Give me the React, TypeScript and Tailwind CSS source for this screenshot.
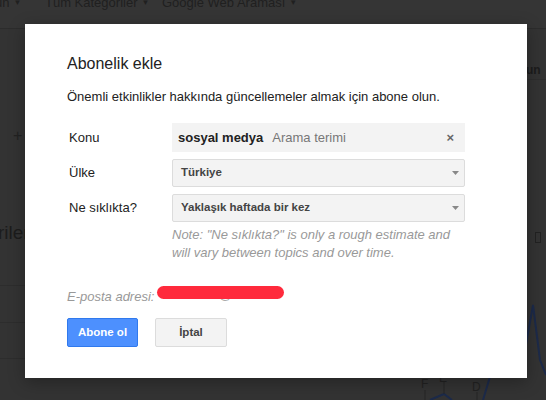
import React from "react";

function Caret() {
  return (
    <svg width="7" height="4" viewBox="0 0 7 4" className="shrink-0">
      <path d="M0 0h7L3.5 4z" fill="#888" />
    </svg>
  );
}

export default function App() {
  return (
    <div
      className="relative h-[400px] w-[546px] overflow-hidden bg-[#333333] text-[13px]"
      style={{ fontFamily: '"Liberation Sans", Arial, sans-serif' }}
    >
      {/* dimmed page behind the dialog */}
      <div className="flex h-[29px] items-start border-b border-[#2c2c2c] bg-[#353535] text-[13px] leading-none text-[#202020]">
        <span className="-mt-[4px] -ml-[5px] flex w-[50px] items-center gap-1">un <span className="text-[8px]">▼</span></span>
        <span className="-mt-[4px] flex w-[117px] items-center gap-1">Tüm Kategoriler <span className="text-[8px]">▼</span></span>
        <span className="-mt-[4px] flex items-center gap-1">Google Web Araması <span className="text-[8px]">▼</span></span>
      </div>
      <div className="absolute top-[60px] right-0 flex h-[20px] w-[20px] items-center border-b border-[#2e2e2e] text-[12px] font-bold text-[#1c1c1c]">
        un
      </div>
      <div className="absolute top-[124px] left-[13px] text-[16px] text-[#222]">+</div>
      <div className="absolute top-[219px] -left-[2px] text-[19px] text-[#1c1c1c]">riler</div>
      <div className="absolute top-[285px] left-0 h-px w-[25px] bg-[#2d2d2d]" />
      <div className="absolute top-[322px] left-0 h-px w-[25px] bg-[#2d2d2d]" />
      <div className="absolute top-[358px] left-0 h-px w-[25px] bg-[#2d2d2d]" />
      <div className="absolute top-[232px] left-[535px] h-[11px] w-[6px] border border-[#222]" />
      <svg className="absolute top-[300px] left-[380px]" width="166" height="100" viewBox="0 0 166 100">
        <g fill="none" stroke="#1c2a4a" strokeWidth="2">
          <path d="M50 100 L64 94 L72 100" />
          <path d="M103 100 L112 70 L120 40" />
          <path d="M145 50 L153 5 L160 60 L166 75" />
        </g>
        <g fill="none" stroke="#262626" strokeWidth="1">
          <path d="M45 90 V100" />
          <path d="M64 82 V94" />
          <path d="M97 92 V100" />
        </g>
        <g fill="#222" fontSize="12">
          <text x="41" y="88">F</text>
          <text x="59" y="82">E</text>
          <text x="92" y="91">D</text>
        </g>
      </svg>

      {/* dialog */}
      <div className="absolute top-[24px] left-[25px] flex h-[354px] w-[502px] flex-col bg-white pt-[30px] pl-[42px] pr-[62px] shadow-[0_4px_16px_rgba(0,0,0,0.3)]">
        <h2 className="text-[16px] leading-[20px] text-[#222]">Abonelik ekle</h2>
        <p className="mt-[15px] leading-[16px] text-[#222]">
          Önemli etkinlikler hakkında güncellemeler almak için abone olun.
        </p>

        <div className="mt-[18px] grid grid-cols-[105px_1fr] items-start gap-y-[7px]">
          <label className="flex h-[29px] items-center pl-[2px] text-[#222]">Konu</label>
          <div className="flex h-[29px] items-center bg-[#f3f3f3] pr-[11px] pl-[6px]">
            <span className="font-bold text-[#222]">sosyal medya</span>
            <span className="ml-[9px] text-[#777]">Arama terimi</span>
            <span className="ml-auto text-[13px] font-bold text-[#666]">×</span>
          </div>

          <label className="flex h-[28px] items-center pl-[2px] text-[#222]">Ülke</label>
          <div className="flex h-[28px] items-center justify-between rounded-[2px] border border-[#dcdcdc] bg-[#f3f3f3] pr-[5px] pl-[8px] text-[11.5px] font-bold text-[#444]">
            <span>Türkiye</span>
            <Caret />
          </div>

          <label className="flex h-[28px] items-center pl-[2px] text-[#222]">Ne sıklıkta?</label>
          <div>
            <div className="flex h-[28px] items-center justify-between rounded-[2px] border border-[#dcdcdc] bg-[#f3f3f3] pr-[5px] pl-[8px] text-[11.5px] font-bold text-[#444]">
              <span>Yaklaşık haftada bir kez</span>
              <Caret />
            </div>
            <p className="mt-[4px] leading-[18px] text-[#999] italic">
              Note: "Ne sıklıkta?" is only a rough estimate and will vary between topics and over time.
            </p>
          </div>
        </div>

        <div className="relative mt-[27px] flex h-[16px] items-center">
          <span className="text-[#999] italic">E-posta adresi:</span>
          <span className="absolute top-[-4px] left-[142px] text-[#aaa]">G@</span>
          <div className="absolute top-[-3px] left-[90px] h-[13px] w-[127px] rounded-full bg-[#ff2a3c]" />
        </div>

        <div className="mt-[13px] flex gap-[17px]">
          <button className="h-[29px] w-[71px] rounded-[2px] border border-[#3079ed] bg-[#4d90fe] text-[11.5px] font-bold text-white">
            Abone ol
          </button>
          <button className="h-[29px] w-[72px] rounded-[2px] border border-[#dcdcdc] bg-[#f3f3f3] text-[11.5px] font-bold text-[#444]">
            İptal
          </button>
        </div>
      </div>
    </div>
  );
}
